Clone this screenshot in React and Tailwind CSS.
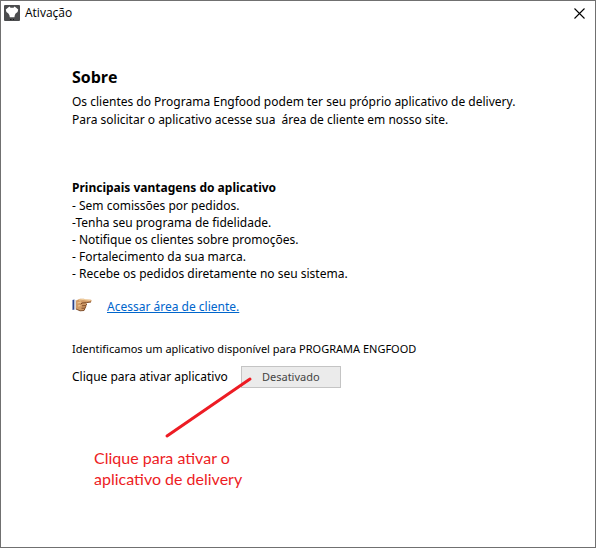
/**
 * ActivationWindow - delivery app activation dialog
 *
 * Title bar, description of the app, list of advantages, link to the
 * client area and the activation button with its red hint.
 */

import React, { useState } from 'react';

const ADVANTAGES = [
  '- Sem comissões por pedidos.',
  '-Tenha seu programa de fidelidade.',
  '- Notifique os clientes sobre promoções.',
  '- Fortalecimento da sua marca.',
  '- Recebe os pedidos diretamente no seu sistema.',
];

function AppIcon() {
  return (
    <svg width="16" height="16" viewBox="0 0 16 16" aria-hidden="true">
      <rect width="16" height="16" rx="1" fill="#4b4c4e" />
      <path
        d="M5.5 1.5 L6.5 2.8 H9.5 L10.5 1.5 L12.5 3 L14.2 4.5 L13.6 7 L11.6 8.6 L10.8 10.2 L10.4 12.2 H5.8 L5.4 10.2 L4.4 8.6 L2.4 7 L1.8 4.5 L3.5 3 Z"
        fill="#fff"
      />
      <path d="M6 14.5h1.5M9 14.5h1" stroke="#161616" />
    </svg>
  );
}

function HandIcon() {
  return (
    <svg width="20" height="14" viewBox="0 0 20 14" aria-hidden="true">
      <path d="M0.5 2 L2.5 1.5 V11.5 L0.5 12 Z" fill="#26418c" />
      <path d="M2.5 2 L4 2 V11.5 L2.5 11.5 Z" fill="#d9dce4" />
      <path
        d="M4 2.5 L8 0.8 L12 0.8 L13 1.6 L19 1.7 Q20.2 2.8 19 4 L14.2 4.6 L15 6 L14.3 8 L13.5 10.5 L12 12.5 L8 12.8 L4 11 Z"
        fill="#d09a66"
      />
      <path d="M7 2 L11 1.6 L18.5 2.4" stroke="#f6d5a4" strokeWidth="1" fill="none" />
      <path d="M5.5 5 L9 4 M6 8 L8.5 7.5" stroke="#f0c893" strokeWidth="1.2" fill="none" />
      <path
        d="M19 4 L14.2 4.7 L10 5 L8.8 6.3 M14.8 6 L13.8 7.6 L10 7.8 M13.9 8.2 L13 10.2 L9.5 10.2 M12.8 10.8 L12 12.5 L8 12.8 L4 11"
        stroke="#754320"
        strokeWidth="0.9"
        fill="none"
      />
    </svg>
  );
}

function TitleBar() {
  return (
    <header className="flex items-center justify-between h-6 pl-[3px] pr-[10px]">
      <div className="flex items-center gap-[5px]">
        <AppIcon />
        <h1 className="font-['Open_Sans',sans-serif] text-[12px] leading-4">Ativação</h1>
      </div>
      <button type="button" aria-label="Fechar" className="flex">
        <svg width="11" height="11" viewBox="0 0 11 11" aria-hidden="true">
          <path d="M0.5 0.5 L10.5 10.5 M10.5 0.5 L0.5 10.5" stroke="#000" strokeWidth="1.1" />
        </svg>
      </button>
    </header>
  );
}

export default function App() {
  const [active, setActive] = useState(false);

  return (
    <div className="min-h-screen border border-[#707070] bg-white text-black font-['Noto_Sans','Open_Sans',sans-serif]">
      <TitleBar />

      <main className="pl-[71px] pr-4 pt-10 pb-6 text-[12px]">
        {/* About */}
        <section>
          <h2 className="font-['Open_Sans',sans-serif] text-[16px] leading-6 font-bold">Sobre</h2>
          <p className="mt-1 leading-[18px]">
            Os clientes do Programa Engfood podem ter seu próprio aplicativo de delivery.
            <br />
            Para solicitar o aplicativo acesse sua&nbsp; área de cliente em nosso site.
          </p>
        </section>

        {/* Advantages */}
        <section className="mt-[50px]">
          <h3 className="leading-[18px] font-bold">Principais vantagens do aplicativo</h3>
          <ul className="leading-[17px]">
            {ADVANTAGES.map((item) => (
              <li key={item}>{item}</li>
            ))}
          </ul>
        </section>

        {/* Client area */}
        <div className="flex items-start gap-[15px] mt-4">
          <HandIcon />
          <a href="#cliente" className="leading-[18px] text-[#0066cc] underline">
            Acessar área de cliente.
          </a>
        </div>

        {/* Activation */}
        <p className="mt-6 text-[11px] leading-[18px]">
          Identificamos um aplicativo disponível para PROGRAMA ENGFOOD
        </p>
        <div className="flex items-center gap-[13px] mt-2">
          <label htmlFor="activate" className="leading-[18px]">
            Clique para ativar aplicativo
          </label>
          <div className="relative">
            <button
              id="activate"
              type="button"
              onClick={() => setActive(!active)}
              className="block w-[100px] h-[22px] border border-[#c4c4c4] bg-[#ebebeb] text-[11px] leading-4 text-[#444]"
            >
              {active ? 'Ativado' : 'Desativado'}
            </button>
            <svg
              width="90"
              height="64"
              viewBox="0 0 90 64"
              className="absolute right-[88px] top-[10px] pointer-events-none"
              aria-hidden="true"
            >
              <path d="M4 60 L87 3" stroke="#ed1c24" strokeWidth="3" strokeLinecap="round" />
            </svg>
          </div>
        </div>

        <p className="mt-[59px] pl-[22px] font-['Lato','Open_Sans',sans-serif] text-[16px] leading-[21px] text-[#ed1c24]">
          Clique para ativar o
          <br />
          aplicativo de delivery
        </p>
      </main>
    </div>
  );
}
